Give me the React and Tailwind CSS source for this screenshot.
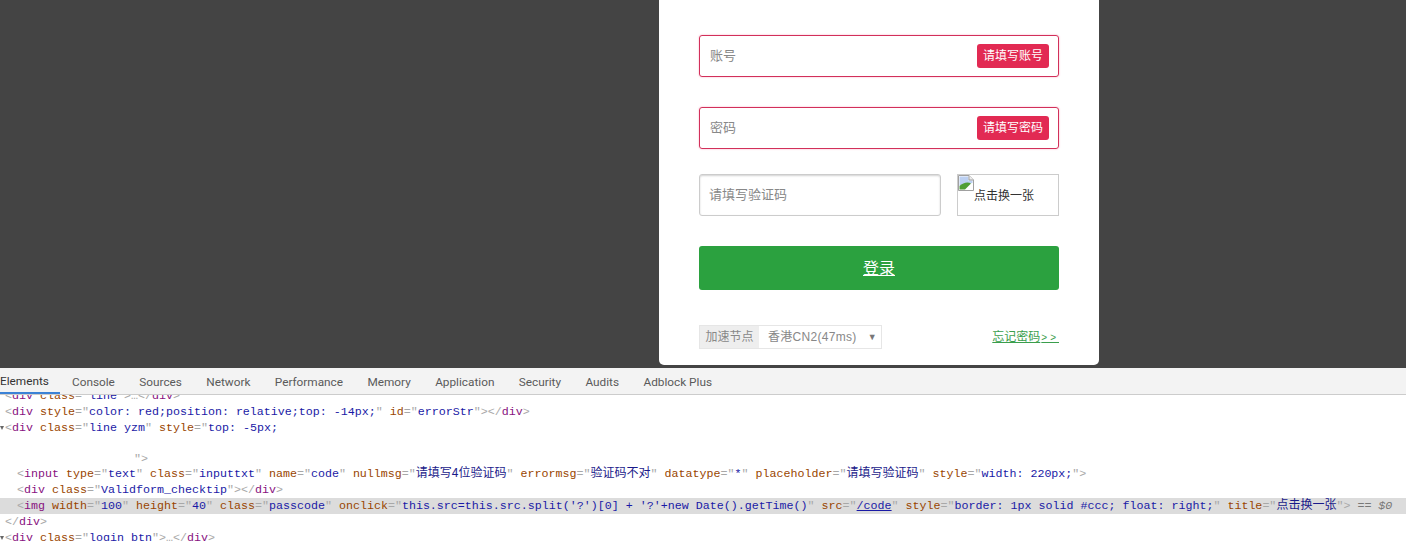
import React from 'react';

const cjk = 'font-["Liberation_Sans","Noto_Sans_CJK_SC",sans-serif]';

// devtools markup tokens
const P = ({ children }) => <span className="text-[#a8a8a8]">{children}</span>;
const T = ({ children }) => <span className="text-[#881280]">{children}</span>;
const A = ({ children }) => <span className="text-[#994500]">{children}</span>;
const V = ({ children }) => <span className="text-[#1a1aa6]">{children}</span>;
const Z = ({ children }) => (
  <span className='font-["Noto_Sans_CJK_SC",sans-serif] text-[12px] leading-[0] text-[#1a1a8a]'>{children}</span>
);

const Attr = ({ name, children }) => (
  <>
    {' '}
    <A>{name}</A>
    <P>=&quot;</P>
    {children}
    <P>&quot;</P>
  </>
);

const Line = ({ pad = 'pl-[5px]', h = 'h-4', selected, arrow, children }) => (
  <div className={`relative leading-4 whitespace-pre ${h} ${pad} ${selected ? 'bg-[#dcdcdc]' : ''}`}>
    {arrow && (
      <span className="absolute left-0 top-[6px] h-0 w-0 border-x-[2px] border-t-[4px] border-x-transparent border-t-[#666]" />
    )}
    {children}
  </div>
);

const ErrorInput = ({ label, tip }) => (
  <div className="flex h-[42px] w-[360px] items-center justify-between rounded-[3px] border border-[#d2305a] pl-[10px] pr-[9px] shadow-[0_0_2px_#f9a8c0]">
    <span className="text-[13px] text-[#888]">{label}</span>
    <span className="flex h-6 w-[72px] items-center justify-center rounded-[3px] bg-[#e22a53] text-xs text-white">{tip}</span>
  </div>
);

const BrokenImage = () => (
  <svg width="16" height="16" viewBox="0 0 16 16" className="shrink-0">
    <path d="M0.5 0.5H11L15.5 5V15.5H0.5Z" fill="#fff" stroke="#a0a0a0" />
    <path d="M1.5 1.5H10.5V5.5H14.5V8L1.5 11Z" fill="#bcd0f2" />
    <path d="M1.5 14.5V11C5 7.5 10 6.5 13 8.5L7 14.5Z" fill="#4f9e35" />
    <path d="M11 0.5V5H15.5" fill="#eee" stroke="#a0a0a0" />
  </svg>
);

const Form = () => (
  <div className={`flex h-[365px] w-[440px] flex-col rounded-b-[5px] bg-white px-10 pt-[35px] ${cjk}`}>
    <ErrorInput label="账号" tip="请填写账号" />
    <div className="mt-[30px]">
      <ErrorInput label="密码" tip="请填写密码" />
    </div>
    <div className="mt-[25px] flex h-[42px] justify-between">
      <div className="flex w-[242px] items-center rounded-[3px] border border-[#ccc] pl-[9px] text-[13px] text-[#888] shadow-[inset_0_1px_2px_rgba(0,0,0,0.18)]">
        请填写验证码
      </div>
      <div className="flex w-[102px] items-start border border-[#ccc] text-xs text-[#333]">
        <BrokenImage />
        <span className="mt-[13px] leading-4">点击换一张</span>
      </div>
    </div>
    <div className="mt-[30px] flex h-11 items-center justify-center rounded-[3px] bg-[#2ba13f] pt-[2px] text-base text-white underline">
      登录
    </div>
    <div className="mt-[35px] flex h-6 items-center justify-between">
      <div className="flex h-6 w-[183px] items-center border border-[#e6e6e6] text-xs text-[#888]">
        <span className="flex h-full w-[59px] items-center justify-center bg-[#eee]">加速节点</span>
        <span className="ml-[9px] tracking-[0.3px]">香港CN2(47ms)</span>
        <span className="ml-[11px] text-[9px] text-[#777]">▼</span>
      </div>
      <a className="text-xs text-[#3a9e4c] underline">
        忘记密码<span className="ml-[1px] text-[10px] tracking-[3px]">&gt;&gt;</span>
      </a>
    </div>
  </div>
);

const tabs = ['Console', 'Sources', 'Network', 'Performance', 'Memory', 'Application', 'Security', 'Audits', 'Adblock Plus'];

const DevTools = () => (
  <div className="flex h-[173px] flex-col overflow-hidden bg-white">
    <div className='relative z-10 flex h-[27px] shrink-0 items-center border-b border-[#ccc] bg-[#f3f3f3] font-["Roboto",sans-serif] text-[11.8px] text-[#5a5a5a]'>
      <div className="flex h-full w-[60px] items-center border-b-2 border-[#3b82d6] pt-[3px] text-[#333]">Elements</div>
      <div className="ml-3 flex gap-[24.4px] pt-[3px]">
        {tabs.map((name) => (
          <span key={name}>{name}</span>
        ))}
      </div>
    </div>
    <div className='mt-[-7px] font-["Liberation_Mono",monospace] text-[11.66px]'>
      <Line>
        <P>&lt;</P><T>div</T><Attr name="class"><V>line</V></Attr><P>&gt;…&lt;/</P><T>div</T><P>&gt;</P>
      </Line>
      <Line>
        <P>&lt;</P><T>div</T>
        <Attr name="style"><V>color: red;position: relative;top: -14px;</V></Attr>
        <Attr name="id"><V>errorStr</V></Attr>
        <P>&gt;&lt;/</P><T>div</T><P>&gt;</P>
      </Line>
      <Line arrow>
        <P>&lt;</P><T>div</T>
        <Attr name="class"><V>line yzm</V></Attr>{' '}
        <A>style</A><P>=&quot;</P><V>top: -5px;</V>
      </Line>
      <Line h="h-[15px]" />
      <Line pad="pl-[134px]" h="h-[15px]"><P>&quot;&gt;</P></Line>
      <Line pad="pl-[17px]">
        <P>&lt;</P><T>input</T>
        <Attr name="type"><V>text</V></Attr>
        <Attr name="class"><V>inputtxt</V></Attr>
        <Attr name="name"><V>code</V></Attr>
        <Attr name="nullmsg"><Z>请填写4位验证码</Z></Attr>
        <Attr name="errormsg"><Z>验证码不对</Z></Attr>
        <Attr name="datatype"><V>*</V></Attr>
        <Attr name="placeholder"><Z>请填写验证码</Z></Attr>
        <Attr name="style"><V>width: 220px;</V></Attr>
        <P>&gt;</P>
      </Line>
      <Line pad="pl-[17px]">
        <P>&lt;</P><T>div</T><Attr name="class"><V>Validform_checktip</V></Attr><P>&gt;&lt;/</P><T>div</T><P>&gt;</P>
      </Line>
      <Line pad="pl-[17px]" selected>
        <P>&lt;</P><T>img</T>
        <Attr name="width"><V>100</V></Attr>
        <Attr name="height"><V>40</V></Attr>
        <Attr name="class"><V>passcode</V></Attr>
        <Attr name="onclick"><V>this.src=this.src.split('?')[0] + '?'+new Date().getTime()</V></Attr>
        <Attr name="src"><span className="text-[#1a1aa6] underline">/code</span></Attr>
        <Attr name="style"><V>border: 1px solid #ccc; float: right;</V></Attr>
        <Attr name="title"><Z>点击换一张</Z></Attr>
        <P>&gt;</P>
        <span className="italic text-[#777]"> == $0</span>
      </Line>
      <Line><P>&lt;/</P><T>div</T><P>&gt;</P></Line>
      <Line arrow>
        <P>&lt;</P><T>div</T><Attr name="class"><V>login btn</V></Attr><P>&gt;…&lt;/</P><T>div</T><P>&gt;</P>
      </Line>
    </div>
  </div>
);

export default function App() {
  return (
    <div className="flex h-[541px] w-[1406px] flex-col overflow-hidden">
      <div className="h-[368px] shrink-0 bg-[#444] pl-[659px]">
        <Form />
      </div>
      <DevTools />
    </div>
  );
}
